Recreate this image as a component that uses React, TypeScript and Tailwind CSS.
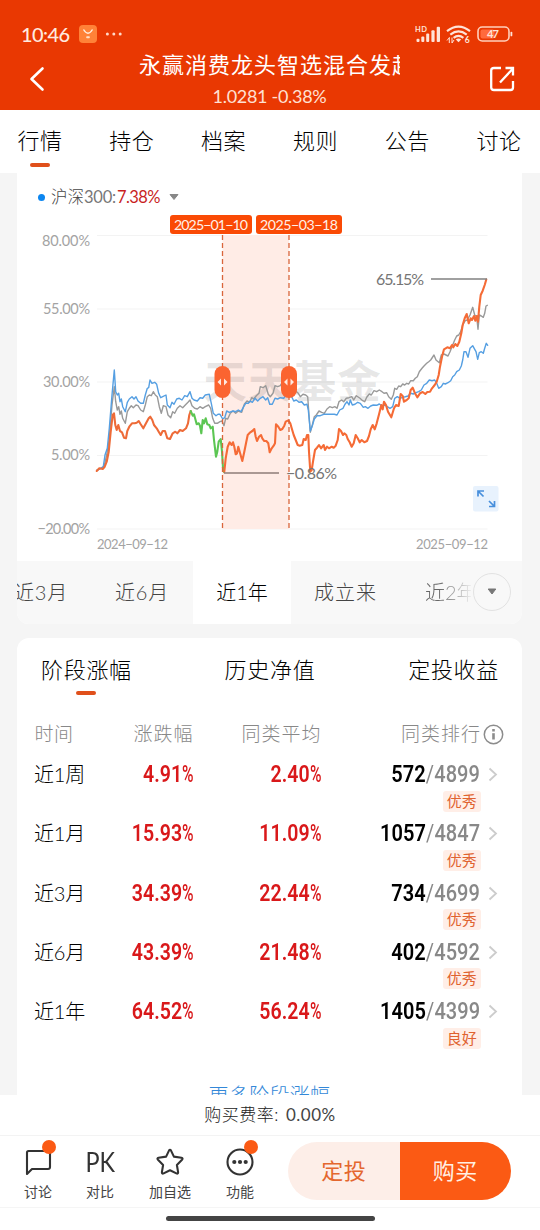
import type { ReactNode } from "react";

const NAV_TABS = ["行情", "持仓", "档案", "规则", "公告", "讨论"];

interface PeriodRow {
  period: string;
  change: string;
  average: string;
  rank: string;
  total: string;
  grade: string;
}

const PERIOD_ROWS: PeriodRow[] = [
  { period: "近1周", change: "4.91", average: "2.40", rank: "572", total: "4899", grade: "优秀" },
  { period: "近1月", change: "15.93", average: "11.09", rank: "1057", total: "4847", grade: "优秀" },
  { period: "近3月", change: "34.39", average: "22.44", rank: "734", total: "4699", grade: "优秀" },
  { period: "近6月", change: "43.39", average: "21.48", rank: "402", total: "4592", grade: "优秀" },
  { period: "近1年", change: "64.52", average: "56.24", rank: "1405", total: "4399", grade: "良好" },
];

const GRID = [
  { y: 235.5, label: "80.00%", labelY: 245.5, x: 42, width: 48 },
  { y: 309, label: "55.00%", labelY: 313.5, x: 43, width: 47 },
  { y: 382, label: "30.00%", labelY: 387, x: 43, width: 47 },
  { y: 455.5, label: "5.00%", labelY: 460, x: 51, width: 39 },
  { y: 529, label: "−20.00%", labelY: 533.5, x: 37.5, width: 52.5 },
];

const FUND_START =
  "96.7,471 99.3,468.3 102.7,469 104.7,466.7 106.7,461.7 108.7,451.7 110.7,431.7 112.7,415 114,413.3 115.3,425 116.7,430 118.3,425 120,431 122,432.3 124,437.7 126,438.3 127.3,431 129.3,426.7 132,423.3 134.7,423.3 136.7,422.7 138.7,421 140.7,424.3 143.3,428.3 146,423.3 148.7,418.3 150.3,416.7 152.3,420 154,425 156.7,428.3 158.7,431.7 160.7,435 162.7,431 165,431 167.3,438.3 170,439 172.7,433.3 175.3,431.7 177.3,433.3 180,430 182.7,431 186,428.3 188,423.3 189.3,415 190.7,411";
const FUND_DRAWDOWN =
  "190.7,411 192.7,415.7 194,414.3 195.3,419 196.7,424.3 198.7,423.3 200,425.7 201.3,433.3 202.7,420 204,423.3 205.7,418.3 207.3,424.3 209.3,425 210.7,428.3 212.7,426.7 214,440 216,456.7 217.3,451.7 218.7,441.7 220.7,439 222,451.7 223,468.3 224,472";
const FUND_REST =
  "224.3,471.7 225.7,458.3 227.7,446.7 229.7,442.3 231.7,445 233,442.3 234.3,446.7 235.7,454.3 237,453.3 238.3,446.7 239.7,451.7 242.3,461 244.3,451.7 246,443.3 247.7,435 250.3,432.3 252.3,431 254.3,429 255.7,436.7 257,441 259,436.7 261,435 262.3,438.3 264.3,441 266.3,441 268.3,443.3 269.7,452.3 271.7,448.3 273.7,445.7 275,443.3 276,424.3 278.3,426.7 280.3,430 282.3,429 284.3,425.7 285.7,421.7 288.3,420.3 290.3,423.3 291.7,428.3 293.7,435 295.7,440 297.7,445 299.7,445.7 302.3,445 303.7,439 305.7,440 307,435 308.3,435 309,451.7 310.3,471.7 311.7,470 313,461.7 315,450 317,447.7 319,445 321,448.3 323.7,445 325,450 327,446.7 329,448.3 331.7,446.7 333.7,447.7 335.7,445.7 337.7,440 339,429 341,431 343,435 344.3,433.3 346.3,435 347.7,439 349.7,442.3 351.7,446.7 353.7,443.3 355.7,435 357.7,438.3 359.7,442.3 361.7,440 364.3,442.3 367,441 369,436 370.7,429.3 372.7,425 374.7,429.3 376.7,423.3 379.3,413.3 381.3,405 382.7,409.3 384,401.7 386,405 388,411.7 391.3,417.3 394,408.3 396,405 398.7,406 400.7,394 402.7,396 404,401.7 406.7,400 408.7,398.3 410.7,390 412.7,387.7 414.7,392.7 417.3,397.3 420,393.3 422.7,392 425.3,394 427.3,392 430,391.7 432,388.3 434.7,385 436.7,381.7 438.7,375 440,366.7 442,356.7 444,349.3 447.3,347.3 450,348.3 452,345 453.3,347.3 455.3,344 457.3,346 459.3,341.7 461.3,333.3 462.7,325 464.7,318.3 466.7,314 468.7,323.3 470.7,318.3 472,320 474,316 475.3,320.7 476.7,316 478,321.7 479.3,306.7 480.7,295 482.7,290.7 484.7,285 486.3,279.5";
const PEER_AVERAGE =
  "96.7,470.3 100.7,468.3 104,466.7 106.7,455 109.3,438.3 112,405 114.3,386.7 115.7,401.7 117.3,410 118.7,406.7 120,414.3 121.3,411 122.7,418.3 125.3,423.3 127.3,411.7 129.3,408.3 131.3,405.7 133.3,407.7 136,405 138,405.7 140.7,410 143.3,411.7 145.3,405 147.3,396.7 149.3,395 151.3,395.7 153.3,391.7 155.3,395 157.3,396.7 159.3,406.7 161.3,413.3 163.3,405.7 166,406.7 168,415 170.7,417.7 172.7,411.7 174.7,413.3 177.3,408.3 180,405.7 182.7,407.7 185.3,405 188,402.3 190,400 192,405.7 194.7,408.3 197.3,409 200,406.7 202.7,408.3 205.3,406.7 208.7,405 210.7,408.3 212.7,418.3 214.7,423.3 217.3,423.3 220,421.7 222,421 224,425.7 225.7,418.3 227.7,419 230.3,413.3 233,411 235.7,413.3 238.3,411 241.7,412.3 244.3,404.3 247,401 249.7,402.3 251.7,397.7 253.7,399 256.3,395.7 259,393.3 260.3,386.7 263,387.7 265.7,385.7 268.3,394.3 270.3,396.7 273,393.3 275,385.7 277.7,386.7 280.3,385.7 281.7,383.3 285,386.7 287.7,388.3 291,391.7 293.7,392.3 295.7,391 298.3,393.3 300.3,396.7 303,394.3 305.7,395 307.7,396.7 309,415 310.3,432.3 312.3,425 314.3,416.7 316.3,415 319,411 321.7,412.3 324.3,413.3 327,409 329.7,406.7 332.3,407.7 335,406.7 337,408.3 339,401.7 341.7,400 343.7,401.7 346.3,398.3 349,397.7 351.7,396.7 353.7,400 356.3,395.7 360,398.3 362.7,400.7 364.7,401.7 366.7,397.3 369.3,394 371.3,395 374,390.7 376.7,391.7 379.3,390 382,391.7 384,393.3 386.7,392.7 388.7,396.7 391.3,399.3 393.3,395 394.7,388.3 396.7,389.3 398.7,386 400.7,386.7 402.7,384 404.7,385 406.7,383.3 408.7,384 410.7,380.7 413.3,380.7 415.3,378.3 417.3,376.7 419.3,371.7 422,368.3 424,366 426.7,363.3 428.7,361.7 430.7,360 434,355 436,360 439.3,362.7 441.3,355 444,354 446,355 448,356 450,351.7 452.7,345 454.7,340 456.7,336 458.7,335 460.7,331.7 462.7,325 465.3,320.7 467.3,320 470,315 472.7,307.3 474.7,315 476.7,316.7 478,329.3 479.3,315 481.3,316 483.3,317.3 484.7,313.3 486,306 487.3,305.3";
const CSI_300 =
  "96.7,470.3 100.7,468.3 103.3,466.7 105,455 107.3,448.3 109.3,428.3 112,395 114.3,370 115.7,391.7 117.3,395 118.7,393.3 120,401.7 121.3,399 122.7,406.7 125.3,411.7 127.3,402.3 129.3,399 132,396.7 134,399 136,396.7 138,401 140.7,403.3 143.3,403.3 145.3,395 147.3,388.3 148.7,387.7 150,380 152,383.3 154.7,382.3 156.7,384.3 158.7,393.3 160.7,397.7 162.7,396.7 166,395 167.3,405 170,407.7 172,402.3 174,404.3 176.7,399 179.3,398.3 182,400 184.7,395.7 187.3,396.7 190,391.7 192,398.3 194,400 197.3,401 200,397.7 202.7,398.3 205.3,395 209.3,394.3 211.3,403.3 213.3,413.3 216,415.7 218,414.3 220,414.3 222.7,419 224.7,417.7 226.7,411 229.3,412.3 233,411 235.7,411.7 238.3,410 241,411.7 243.7,406.7 245.7,403.3 248.3,403.3 250.3,401 252.3,402.3 255,398.3 257.7,401 260.3,398.3 263,396.7 265.7,400 267.7,397.7 269.7,404.3 272.3,404.3 275,398.3 277.7,399 280.3,397.7 283.7,398.3 286.3,394.3 289,393.3 291.7,396.7 293.7,401 296.3,400 299,402.3 301.7,401.7 304.3,405 307,404.3 308.3,410 310.3,431 312.3,425.7 314.3,419 317,415.7 320.3,415.7 323.7,414.3 334.3,414.3 337,415 339.7,410 343,408.3 345,404.3 347,401.7 349,405 350.3,400 352.3,405 355,404.3 357.7,402.3 360.3,403.3 363.3,407.3 365.3,406.7 368,408.3 370.7,406 373.3,405 376.7,405.3 379.3,404 382,406 384.7,405 387.3,406.7 390,408.3 392.7,406.7 394.7,398.3 397.3,396.7 400,398.3 402.7,397.3 405.3,396.7 408,396 410.7,393.3 413.3,394 416,392.7 418.7,391.7 421.3,390 424,385 426.7,383.3 429.3,380 432,380.7 434.7,380 436.7,383.3 438.7,388.3 441.3,386.7 443.3,383.3 445.3,384 448,382.7 450.7,380.7 452.7,376.7 454.7,375 456.7,371.7 459.3,370 461.3,366 462.7,360 464,351.7 466,351.7 468,357.3 470,348.3 472.7,345.7 474.7,349.3 476,351.7 477.7,359.3 479.3,352.7 481.3,351.7 483.3,353.3 484.7,348.3 486.3,343.3 487.7,345.3";

export default function App() {
  return (
    <div className="flex h-[1230px] w-[540px] flex-col overflow-hidden bg-white font-['Lato','Noto_Sans_CJK_SC',sans-serif] font-light text-black">
      <Header />
      <NavTabs />
      <main className="h-[922px] overflow-hidden bg-[#f5f5f5] pr-[18px] pl-[17px]">
        <section className="overflow-hidden rounded-b-xl bg-white">
          <TrendChart />
          <RangeTabs />
        </section>
        <PerformanceCard />
      </main>
      <Footer />
    </div>
  );
}

function Header() {
  return (
    <header className="h-[110px] bg-[#e93802] pt-[22px] text-white">
      <div className="flex h-6 items-center pr-[27px] pl-[21px] text-[#ffe9df]">
        <span className="w-[49px] text-[20px] leading-6 font-medium tracking-[-0.6px]">10:46</span>
        <svg className="ml-[9px]" width="18" height="18" viewBox="0 0 18 18">
          <rect width="18" height="18" rx="4" fill="#ff8238" />
          <path d="M4.5 4.5 Q9 12 13.5 4.5" stroke="#fff0e0" strokeWidth="1.4" fill="none" />
          <rect x="7.2" y="11.3" width="3.6" height="2" rx="0.8" fill="#ffe0c8" />
        </svg>
        <svg className="ml-2" width="18" height="6" viewBox="0 0 18 6" fill="#ffd9c9">
          <circle cx="2.4" cy="3" r="1.5" />
          <circle cx="8.8" cy="3" r="1.5" />
          <circle cx="15.2" cy="3" r="1.5" />
        </svg>
        <StatusIcons />
      </div>
      <div className="flex items-center">
        <svg className="mt-[3px] ml-[29px]" width="16" height="26" viewBox="0 0 16 26" fill="none">
          <path d="M13.5 2.5 L2.5 13 L13.5 23.5" stroke="#fff" strokeWidth="2.6" strokeLinecap="round" strokeLinejoin="round" />
        </svg>
        <div className="ml-[94px] w-[261px]">
          <h1 className="overflow-hidden text-[22px] leading-[38px] font-normal tracking-[1px] whitespace-nowrap">永赢消费龙头智选混合发起</h1>
          <p className="text-center text-[18px] leading-6 font-normal tracking-[-0.3px] text-[#ffe0d3]">1.0281 -0.38%</p>
        </div>
        <svg className="mt-[3px] ml-[88px]" width="28" height="28" viewBox="0 0 28 28" fill="none" stroke="#fff" strokeWidth="2.3" strokeLinejoin="round">
          <path d="M13 3 H6 Q3.2 3 3.2 5.5 V22.5 Q3.2 25 6 25 H22.5 Q25 25 25 22.5 V16" />
          <path d="M12 17.5 L24.5 4 M17.5 3 H25 V10.5" strokeLinejoin="miter" />
        </svg>
      </div>
    </header>
  );
}

function StatusIcons() {
  return (
    <svg className="ml-auto" width="98" height="20" viewBox="0 0 98 20" fill="#ffe3d8">
      <text x="0" y="8.2" fontSize="7.5" fontWeight="700" textLength="12">HD</text>
      <rect x="1.5" y="14.8" width="3" height="3.2" rx="1" />
      <rect x="6.3" y="12.5" width="3" height="5.5" rx="1" />
      <rect x="11.2" y="9.5" width="3" height="8.5" rx="1" />
      <rect x="16.4" y="6.2" width="3.2" height="11.8" rx="1" />
      <rect x="21.7" y="2.8" width="3.3" height="15.2" rx="1" />
      <g fill="none" stroke="#ffe3d8" strokeWidth="2.1">
        <path d="M32 7.2 Q43.5 -1.8 55 7.2" />
        <path d="M35.3 10.6 Q43.5 4.2 51.7 10.6" />
        <path d="M38.6 13.8 Q43.5 10 48.4 13.8" />
      </g>
      <path d="M43.5 18.2 L40.8 15.4 Q43.5 13.6 46.2 15.4 Z" />
      <path d="M34.3 13.5 V19 M34.5 13.5 L32 16.5 M37 13.5 V19 L39 16" stroke="#ffe3d8" strokeWidth="1" fill="none" />
      <text x="49.7" y="19" fontSize="8.5" fontWeight="700">6</text>
      <rect x="63" y="3" width="31" height="14" rx="4.2" fill="none" stroke="#ffd0bc" strokeWidth="1.6" />
      <rect x="65.5" y="5.5" width="14" height="9" rx="2" fill="#ff6a3c" />
      <text x="72" y="13.9" fontSize="11" fontWeight="700" textLength="12">47</text>
      <rect x="95.5" y="7.7" width="1.8" height="4.6" rx="0.9" />
    </svg>
  );
}

function NavTabs() {
  return (
    <nav className="flex h-[63px] pt-[15px] pl-[17.5px]">
      {NAV_TABS.map((tab, index) => (
        <div key={tab} className="flex w-[91.8px] shrink-0 flex-col items-start">
          <span className="text-[22px] leading-8 tracking-[0.5px]">{tab}</span>
          {index === 0 ? <span className="mt-[6px] ml-3 h-1 w-5 rounded-full bg-[#e0501b]" /> : null}
        </div>
      ))}
    </nav>
  );
}

function TrendChart() {
  return (
    <div className="relative h-[387.5px]">
      <div className="flex items-center pt-3 pl-[21px]">
        <span className="h-[7px] w-[7px] rounded-full bg-[#0c86f0]" />
        <span className="ml-1.5 w-[66px] text-[16.5px] leading-6 text-[#444]">
          沪深<span className="font-normal tracking-[-0.2px] text-[#777]">300:</span>
        </span>
        <span className="w-[43px] text-[16.5px] leading-6 font-normal tracking-[-0.6px] text-[#c91f1f]">7.38%</span>
        <svg className="ml-[9px]" width="10" height="6" viewBox="0 0 10 6">
          <path d="M1 0.5 H9 L5 5.5 Z" fill="#888" stroke="#888" strokeLinejoin="round" />
        </svg>
      </div>
      <svg className="absolute inset-0" width="505" height="387" viewBox="17 173 505 387" fontFamily="Lato, 'Noto Sans CJK SC', sans-serif" fontWeight="400">
        {GRID.map((line) => (
          <g key={line.label}>
            <path d={`M97 ${line.y} H487.5`} stroke="#f3f3f3" />
            <text x={line.x} y={line.labelY} fontSize="14.5" fill="#a3a3a3" textLength={line.width}>
              {line.label}
            </text>
          </g>
        ))}
        <text x="97" y="549" fontSize="13" fill="#a3a3a3" textLength="71">2024−09−12</text>
        <text x="416" y="549" fontSize="13" fill="#a3a3a3" textLength="72">2025−09−12</text>

        <rect x="222.5" y="235" width="66.5" height="294" fill="#ffece6" />
        <text x="203" y="398" fontSize="44" fontWeight="700" fill="#000" fillOpacity="0.09" textLength="178">天天基金</text>

        <g fill="none" strokeLinejoin="round" strokeLinecap="round">
          <polyline points={PEER_AVERAGE} stroke="#999" strokeWidth="1.4" />
          <polyline points={CSI_300} stroke="#559fe2" strokeWidth="1.4" />
          <polyline points={FUND_START} stroke="#ee6b38" strokeWidth="2.1" />
          <polyline points={FUND_DRAWDOWN} stroke="#5cc653" strokeWidth="2.1" />
          <polyline points={FUND_REST} stroke="#f56b36" strokeWidth="2.1" />
        </g>

        <path d="M224 473 H279" stroke="#8e7d77" strokeWidth="1.4" />
        <path d="M431 279 H487" stroke="#808080" strokeWidth="1.4" />
        <text x="286" y="478.5" fontSize="16" fill="#757575" textLength="51">−0.86%</text>
        <text x="376" y="285" fontSize="16" fill="#757575" textLength="48">65.15%</text>

        <path d="M222.5 235 V529 M289 235 V529" stroke="#d9653b" strokeWidth="1.3" strokeDasharray="5 3" />
        <DateFlag x={170} width={82} label="2025−01−10" />
        <DateFlag x={256} width={86} label="2025−03−18" />
        <DragHandle x={222.5} />
        <DragHandle x={289} />

        <rect x="473" y="486" width="25.5" height="25.5" rx="2" fill="#e8f2fd" />
        <path d="M478 496.5 V491 H484 M478.5 491.5 L483.5 496.5 M489 506.5 H494.5 V501 M494 506 L489 501" fill="none" stroke="#478fdc" strokeWidth="1.7" />
      </svg>
    </div>
  );
}

function DateFlag({ x, width, label }: { x: number; width: number; label: string }) {
  return (
    <g>
      <rect x={x} y="215" width={width} height="19" rx="3" fill="#fa4a05" />
      <text x={x + 4} y="229.8" fontSize="14.2" fill="#fff0e8" textLength={width - 8}>
        {label}
      </text>
    </g>
  );
}

function DragHandle({ x }: { x: number }) {
  return (
    <g>
      <rect x={x - 8} y="366" width="16" height="32" rx="8" fill="#fb6430" />
      <path d={`M${x - 1.5} 378.5 V385.5 L${x - 5} 382 Z M${x + 1.5} 378.5 V385.5 L${x + 5} 382 Z`} fill="#ffe9df" />
    </g>
  );
}

function RangeTabs() {
  return (
    <div className="relative flex h-[63px] bg-[#f8f8f8] text-[20px] leading-[62px] text-[#444]">
      <span className="-ml-[3px] w-[101px] shrink-0 tracking-[0.8px]">近3月</span>
      <span className="w-[78px] shrink-0 tracking-[0.8px]">近6月</span>
      <span className="w-[98px] shrink-0 bg-white text-center text-black">近1年</span>
      <span className="ml-[23px] w-[111px] shrink-0 tracking-[1px]">成立来</span>
      <span className="w-[46px] shrink-0 overflow-hidden bg-gradient-to-r from-[#666] from-30% to-[#eee] bg-clip-text whitespace-nowrap text-transparent">近2年</span>
      <span className="mt-3 ml-[1.5px] flex h-[38px] w-[38px] shrink-0 items-center justify-center rounded-full border border-[#e2e2e2]">
        <svg width="10" height="7" viewBox="0 0 10 7">
          <path d="M1.2 1 H8.8 L5 6 Z" fill="#777" stroke="#777" strokeLinejoin="round" />
        </svg>
      </span>
    </div>
  );
}

function PerformanceCard() {
  return (
    <section className="mt-[14.5px] h-[520px] rounded-xl bg-white">
      <div className="flex justify-between pt-4 pr-[23px] pl-6 text-[22px] leading-8 tracking-[0.7px]">
        <div className="flex flex-col items-center">
          <span>阶段涨幅</span>
          <span className="mt-[5px] h-1 w-5 rounded-full bg-[#e0501b]" />
        </div>
        <span>历史净值</span>
        <span>定投收益</span>
      </div>
      <div className="mt-[25px] flex h-7 items-center pl-[17.5px] text-[19px] leading-7 text-[#888]">
        <span className="w-[60px] tracking-[0.5px]">时间</span>
        <span className="w-[99px] text-right tracking-[1px]">涨跌幅</span>
        <span className="w-32 text-right tracking-[1px]">同类平均</span>
        <span className="w-[159.5px] text-right tracking-[1px]">同类排行</span>
        <svg className="ml-0.5" width="21" height="21" viewBox="0 0 21 21" fill="none" stroke="#8c8c8c">
          <circle cx="10.5" cy="10.5" r="9.2" strokeWidth="1.5" />
          <path d="M10.5 9.2 V15.5" strokeWidth="2.6" />
          <path d="M10.5 5 V7.5" strokeWidth="2.6" />
        </svg>
      </div>
      {PERIOD_ROWS.map((row) => (
        <div key={row.period} className="flex h-[59.3px] pt-3 pl-[17px]">
          <span className="w-[60px] text-[20px] leading-7 tracking-[-0.2px]">{row.period}</span>
          <Percent className="w-[100px]" value={row.change} />
          <Percent className="w-[127.5px]" value={row.average} />
          <div className="flex w-[159px] flex-col items-end">
            <span className="mt-px origin-right scale-x-[0.87] font-['Roboto'] text-[23px] leading-7 font-semibold tracking-[0.1px]">
              {row.rank}
              <span className="font-normal text-[#888]">/</span>
              <span className="font-medium text-[#888]">{row.total}</span>
            </span>
            <span className="mt-[1.5px] h-[21.5px] w-[37.5px] rounded-[3px] bg-[#ffeee7] text-center text-[15px] leading-[21px] font-normal text-[#e0622f]">{row.grade}</span>
          </div>
          <svg className="mt-[7px] ml-[7.5px]" width="10" height="15" viewBox="0 0 10 15" fill="none">
            <path d="M1.5 1.5 L8 7.5 L1.5 13.5" stroke="#ccc" strokeWidth="1.8" />
          </svg>
        </div>
      ))}
      <p className="mt-[37px] text-center text-[20px] leading-7 tracking-[0.3px] text-[#3388d8]">更多阶段涨幅</p>
    </section>
  );
}

function Percent({ value, className }: { value: string; className: string }) {
  return (
    <span className={`mt-px origin-right scale-x-[0.85] text-right font-['Roboto'] text-[23px] leading-7 font-semibold text-[#d9181a] ${className}`}>
      {value}
      <span className="inline-block w-[14px] origin-left scale-x-[0.8] text-left font-medium">%</span>
    </span>
  );
}

function Footer() {
  return (
    <footer className="flex-1 bg-white">
      <p className="h-[41px] border-b border-[#f3f3f3] text-center text-[17px] leading-10 tracking-[0.5px] text-[#222]">
        购买费率: <span className="ml-0.5 font-normal text-[#444]">0.00%</span>
      </p>
      <div className="flex h-[72px] border-b border-[#f5f5f5] pl-2">
        <ActionItem label="讨论" hasBadge>
          <svg width="28" height="28" viewBox="0 0 28 28" fill="none" stroke="#333" strokeWidth="2.1" strokeLinejoin="round">
            <path d="M4.5 3 H24 Q26 3 26 5 V19 Q26 21 24 21 H8 L3 26 V4.5 Q3 3 4.5 3 Z" />
          </svg>
        </ActionItem>
        <ActionItem label="对比" className="ml-0.5">
          <span className="scale-x-90 text-[26px] leading-7 font-normal tracking-[-0.3px] text-[#333]">PK</span>
        </ActionItem>
        <ActionItem label="加自选" className="ml-2.5">
          <svg width="30" height="28" viewBox="0 0 30 28" fill="none" stroke="#333" strokeWidth="2.1" strokeLinejoin="round">
            <path d="M14.1 2.4 Q15 1 15.9 2.4 L18.9 8.6 L26.4 9.8 Q28.4 10.3 27 11.8 L21.9 17 L23.1 24.2 Q23.2 26.2 21.4 25.4 L15 22.2 L8.6 25.4 Q6.8 26.2 6.9 24.2 L8.1 17 L3 11.8 Q1.6 10.3 3.6 9.8 L11.1 8.6 Z" />
          </svg>
        </ActionItem>
        <ActionItem label="功能" className="ml-2.5" hasBadge>
          <svg width="28" height="28" viewBox="0 0 28 28">
            <circle cx="14" cy="14" r="12.5" fill="none" stroke="#333" strokeWidth="2.1" />
            <g fill="#333">
              <circle cx="8.3" cy="14" r="2.1" />
              <circle cx="14" cy="14" r="2.1" />
              <circle cx="19.7" cy="14" r="2.1" />
            </g>
          </svg>
        </ActionItem>
        <div className="mt-1.5 ml-[18px] flex h-[58px] w-[223px] overflow-hidden rounded-full text-center text-[22px] leading-[58px] font-normal tracking-[0.5px]">
          <span className="w-[111.5px] bg-[#fdeee8] text-[#e4672f]">定投</span>
          <span className="w-[111.5px] bg-[#fb5a14] text-[#fff0e3]">购买</span>
        </div>
      </div>
      <div className="mx-auto mt-2 h-[5px] w-[209px] rounded-full bg-[#444]" />
    </footer>
  );
}

interface ActionItemProps {
  label: string;
  className?: string;
  hasBadge?: boolean;
  children: ReactNode;
}

function ActionItem({ label, className = "", hasBadge, children }: ActionItemProps) {
  return (
    <div className={`relative flex w-[60px] shrink-0 flex-col items-center pt-[11.5px] ${className}`}>
      {children}
      <span className="mt-[5px] text-[14px] leading-[22px] font-normal whitespace-nowrap text-[#444]">{label}</span>
      {hasBadge ? <span className="absolute top-[3.5px] right-[12.5px] h-3.5 w-3.5 rounded-full bg-[#fb5a14]" /> : null}
    </div>
  );
}
